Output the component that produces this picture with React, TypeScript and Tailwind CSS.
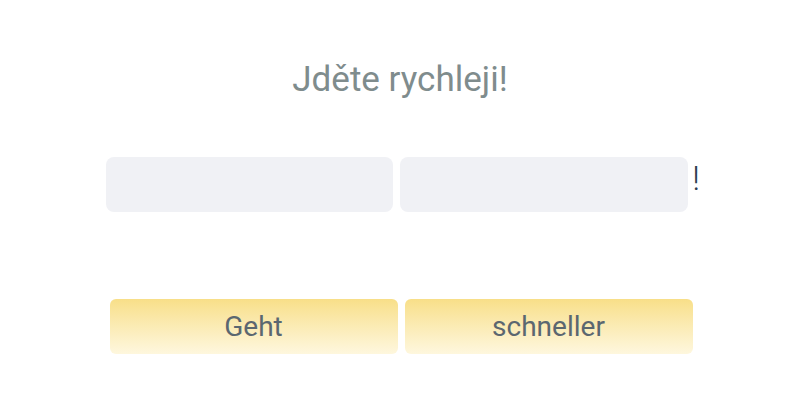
import React from "react";

const App: React.FC = () => {
  return (
    <div
      className="w-[800px] h-[400px] bg-white flex flex-col items-center"
      style={{ fontFamily: "Roboto, 'Liberation Sans', sans-serif" }}
    >
      <h1 className="mt-[58px] text-[35px] leading-[44px] text-[#7f8c8d]">
        Jděte rychleji!
      </h1>

      <div className="mt-[55px] flex items-center gap-[7px] ml-[6px]">
        <div className="w-[287px] h-[55px] rounded-[8px] bg-[#f0f1f5]" />
        <div className="w-[288px] h-[55px] rounded-[8px] bg-[#f0f1f5]" />
        <span className="-ml-[3px] -mt-[13px] text-[34px] leading-[40px] font-light text-[#2c3e50]">!</span>
      </div>

      <div className="mt-[87px] ml-[2px] flex gap-[7px]">
        {["Geht", "schneller"].map((w) => (
          <button
            key={w}
            className="w-[288px] h-[55px] rounded-[6px] bg-gradient-to-b from-[#f8df88] to-[#fef7de] text-[28px] text-[#5b6770]"
          >
            {w}
          </button>
        ))}
      </div>
    </div>
  );
};

export default App;
